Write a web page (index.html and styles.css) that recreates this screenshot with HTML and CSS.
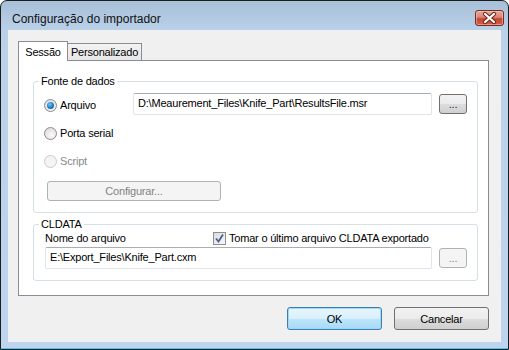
FILE: index.html
```html
<!DOCTYPE html>
<html>
<head>
    <meta charset="UTF-8">
    <title>Configuração do importador</title>
    <link rel="stylesheet" href="styles.css">
</head>
<body>
    <div class="window">
        <div class="titlebar">
            <span class="title">Configuração do importador</span>
            <button class="close-btn" aria-label="Fechar">
                <svg width="27" height="14" viewBox="0 0 27 14">
                    <path d="M9 3 L18 11 M18 3 L9 11" stroke="#6b2418" stroke-width="4.2" stroke-linecap="round"/>
                    <path d="M9 3 L18 11 M18 3 L9 11" stroke="#ffffff" stroke-width="2.2" stroke-linecap="round"/>
                </svg>
            </button>
        </div>

        <div class="client">
            <div class="tabs">
                <div class="tab active">Sessão</div>
                <div class="tab">Personalizado</div>
            </div>

            <div class="tab-panel">
                <fieldset class="group source">
                    <legend>Fonte de dados</legend>
                    <div class="source-row">
                        <label class="radio"><span class="radio-dot checked"></span>Arquivo</label>
                        <div class="textbox">D:\Meaurement_Files\Knife_Part\ResultsFile.msr</div>
                        <button class="browse">...</button>
                    </div>
                    <label class="radio"><span class="radio-dot"></span>Porta serial</label>
                    <label class="radio disabled"><span class="radio-dot"></span>Script</label>
                    <button class="btn config" disabled>Configurar...</button>
                </fieldset>

                <fieldset class="group cldata">
                    <legend>CLDATA</legend>
                    <div class="cl-head">
                        <span class="cl-label">Nome do arquivo</span>
                        <label class="check">
                            <span class="check-box">
                                <svg width="11" height="11" viewBox="0 0 11 11">
                                    <path d="M2 5.5 L4.5 8.5 L9 1.5" fill="none" stroke="#4b5d9c" stroke-width="1.8"/>
                                </svg>
                            </span>
                            Tomar o último arquivo CLDATA exportado
                        </label>
                    </div>
                    <div class="file-row">
                        <div class="textbox wide">E:\Export_Files\Knife_Part.cxm</div>
                        <button class="browse" disabled>...</button>
                    </div>
                </fieldset>
            </div>

            <div class="actions">
                <button class="btn default">OK</button>
                <button class="btn">Cancelar</button>
            </div>
        </div>
    </div>
</body>
</html>
```

FILE: styles.css
```css
* {
    margin: 0;
    padding: 0;
    box-sizing: border-box;
}

body {
    font-family: 'Liberation Sans', Arial, sans-serif;
    font-size: 11px;
    letter-spacing: -0.2px;
    line-height: 13px;
    color: #000;
    background: #fff;
}

button {
    font-family: inherit;
    font-size: inherit;
    letter-spacing: inherit;
    color: inherit;
}

/* window frame */
.window {
    width: 509px;
    height: 350px;
    border: 1px solid #1c1c1c;
    border-radius: 7px 7px 0 0;
    padding: 0 7px 7px;
    background: linear-gradient(#a7bfd7, #b9d1e9 30px, #bdd5ee);
    box-shadow: inset 0 -1px 0 #3ccbf2;
}

.titlebar {
    height: 29px;
    display: flex;
    justify-content: space-between;
    align-items: flex-start;
}

.title {
    font-size: 12px;
    letter-spacing: 0;
    color: #111;
    padding: 12px 0 0 4px;
}

.close-btn {
    width: 29px;
    height: 16px;
    margin: 9px -3px 0 0;
    border: 1px solid #7a2a20;
    border-radius: 3px;
    background: linear-gradient(#e6a99d, #d98474 45%, #c4452f 55%, #d0604b);
    box-shadow: inset 0 0 0 1px rgba(255, 210, 200, 0.5);
    display: flex;
    align-items: center;
    justify-content: center;
}

.client {
    height: 312px;
    background: #f0f0f0;
    padding: 11px 12px 12px 10px;
    display: flex;
    flex-direction: column;
}

/* tabs */
.tabs {
    height: 19px;
    display: flex;
    align-items: flex-end;
}

.tab {
    height: 17px;
    border: 1px solid #898c95;
    border-bottom: none;
    padding-top: 2px;
    text-align: center;
    background: linear-gradient(#f3f3f3, #e6e6e6);
}

.tab.active {
    height: 20px;
    width: 50px;
    margin-bottom: -1px;
    padding-top: 4px;
    background: #fff;
    position: relative;
    z-index: 1;
}

.tab + .tab {
    width: 74px;
    border-left: none;
}

.tab-panel {
    height: 236px;
    border: 1px solid #898c95;
    background: #fff;
    padding: 14px 11px 0 14px;
}

/* group boxes */
.group {
    border: 1px solid #d5dfe5;
    border-radius: 3px;
    padding: 5px 10px 11px;
}

.group legend {
    padding: 0 2px;
    margin-left: -5px;
}

.source-row {
    display: flex;
    align-items: center;
    height: 22px;
}

.source-row .radio {
    width: 89px;
    margin-top: 2px;
}

.radio {
    display: flex;
    align-items: center;
    gap: 3px;
    height: 16px;
    margin-top: 10px;
}

.radio.disabled {
    color: #8a8a8a;
    margin-top: 12px;
}

.radio-dot {
    width: 13px;
    height: 13px;
    border-radius: 50%;
    border: 1px solid #8b8c8d;
    background: radial-gradient(circle at 60% 65%, #fafafa, #d6d6d6);
    display: flex;
    align-items: center;
    justify-content: center;
}

.radio-dot.checked::after {
    content: "";
    width: 7px;
    height: 7px;
    border-radius: 50%;
    background: radial-gradient(circle at 40% 35%, #6ad0f8, #1e78c2 55%, #0a4e8a);
}

.radio.disabled .radio-dot {
    border-color: #cacaca;
    background: #f4f4f4;
}

.textbox {
    width: 299px;
    height: 22px;
    border: 1px solid #e2e3ea;
    border-top-color: #abadb3;
    border-radius: 2px;
    padding: 3px 4px;
    white-space: nowrap;
    overflow: hidden;
}

.textbox.wide {
    width: 387px;
}

.browse {
    width: 28px;
    height: 20px;
    margin-left: 7px;
    border: 1px solid #707070;
    border-radius: 3px;
    background: linear-gradient(#f2f2f2, #ebebeb 50%, #dddddd 51%, #cfcfcf);
    line-height: 10px;
    color: #1a1a6a;
}

.browse:disabled {
    border-color: #adb2b5;
    background: #f4f4f4;
    color: #838383;
}

.btn {
    height: 23px;
    width: 95px;
    border: 1px solid #707070;
    border-radius: 3px;
    background: linear-gradient(#f2f2f2, #ebebeb 50%, #dddddd 51%, #cfcfcf);
}

.btn.config {
    width: 174px;
    height: 20px;
    margin: 12px 0 0 3px;
    border-color: #adb2b5;
    background: #f4f4f4;
    color: #838383;
}

.btn.default {
    border-color: #3c7fb1;
    background: linear-gradient(#eaf6fd, #d9f0fc 50%, #bee6fd 51%, #a7d9f5);
    box-shadow: inset 0 0 0 1px #9cd8f7;
}

/* CLDATA */
.cldata {
    margin-top: 5px;
    padding-top: 0;
}

.cl-head {
    display: flex;
    align-items: center;
    height: 14px;
    padding-left: 1px;
}

.cl-label {
    width: 168px;
}

.check {
    display: flex;
    align-items: center;
    gap: 3px;
}

.check-box {
    width: 13px;
    height: 13px;
    border: 1px solid #8f8f8f;
    background: linear-gradient(135deg, #dcdcdc, #f8f8f8);
    display: flex;
    align-items: center;
    justify-content: center;
}

.file-row {
    display: flex;
    align-items: center;
    margin-top: 2px;
    padding-left: 1px;
}

.actions {
    margin-top: 11px;
    display: flex;
    justify-content: flex-end;
    gap: 12px;
}
```
